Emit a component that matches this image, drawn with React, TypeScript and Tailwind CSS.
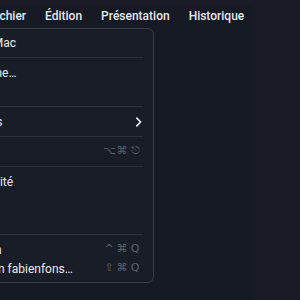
import React from 'react';

type Item =
    | { kind: 'sep' }
    | { kind: 'item'; label: string; shortcut?: string[]; submenu?: boolean };

const appleMenu: Item[] = [
    { kind: 'item', label: 'À propos de ce Mac' },
    { kind: 'sep' },
    { kind: 'item', label: 'Réglages Système…' },
    { kind: 'item', label: 'App Store…' },
    { kind: 'sep' },
    { kind: 'item', label: 'Éléments récents', submenu: true },
    { kind: 'sep' },
    { kind: 'item', label: 'Forcer à quitter…', shortcut: ['⌥', '⌘', '⎋'] },
    { kind: 'sep' },
    { kind: 'item', label: "Suspendre l'activité" },
    { kind: 'item', label: 'Redémarrer…' },
    { kind: 'item', label: 'Éteindre…' },
    { kind: 'sep' },
    { kind: 'item', label: "Verrouiller l'écran", shortcut: ['^', '⌘', 'Q'] },
    { kind: 'item', label: 'Fermer la session fabienfons…', shortcut: ['⇧', '⌘', 'Q'] },
];

const menuBar = ['Safari', 'Fichier', 'Édition', 'Présentation', 'Historique', 'Signets'];

function Chevron() {
    return (
        <svg width="7" height="10" viewBox="0 0 7 10" fill="none" className="mr-[-1px]">
            <path d="M1.8 1.2 L5.6 5 L1.8 8.8" stroke="#e4e6ea" strokeWidth="1.7" strokeLinecap="round" strokeLinejoin="round" />
        </svg>
    );
}

export default function App() {
    return (
        <div
            className="w-[300px] h-[300px] overflow-hidden bg-[#1a1c25] flex relative"
            style={{ fontFamily: 'Roboto, "Liberation Sans", sans-serif' }}
        >
            {/* Window behind the menu */}
            <div className="w-[252px] shrink-0 mt-[6px] bg-[#151a24] flex flex-col overflow-hidden">
                {/* Menu bar */}
                <div className="h-[19px] flex items-center gap-[19px] ml-[-61px] text-[12px] font-medium text-[#e6e7ea] whitespace-nowrap">
                    {menuBar.map((m) => (
                        <span key={m}>{m}</span>
                    ))}
                </div>
            </div>

            {/* Apple menu dropdown */}
            <div className="absolute left-[-103px] top-[28px] w-[257px] rounded-[6px] border border-[#3a3e47] bg-[#181d27] py-[4px] text-[12px] text-[#e8e9ec] whitespace-nowrap">
                {appleMenu.map((it, i) =>
                    it.kind === 'sep' ? (
                        <div key={i} className="h-px bg-[#2d323b] my-[5px] mx-[10px]" />
                    ) : (
                        <div key={i} className="h-[19px] px-[12px] flex items-center justify-between">
                            <span>{it.label}</span>
                            {it.submenu && <Chevron />}
                            {it.shortcut && (
                                <span className="flex items-center gap-[1px] text-[11px] text-[#5b6069]" style={{ fontFamily: '"DejaVu Sans", sans-serif' }}>
                                    {it.shortcut.map((k, j) => (
                                        <span key={j} className="w-[12px] text-center">{k}</span>
                                    ))}
                                </span>
                            )}
                        </div>
                    )
                )}
            </div>
        </div>
    );
}
